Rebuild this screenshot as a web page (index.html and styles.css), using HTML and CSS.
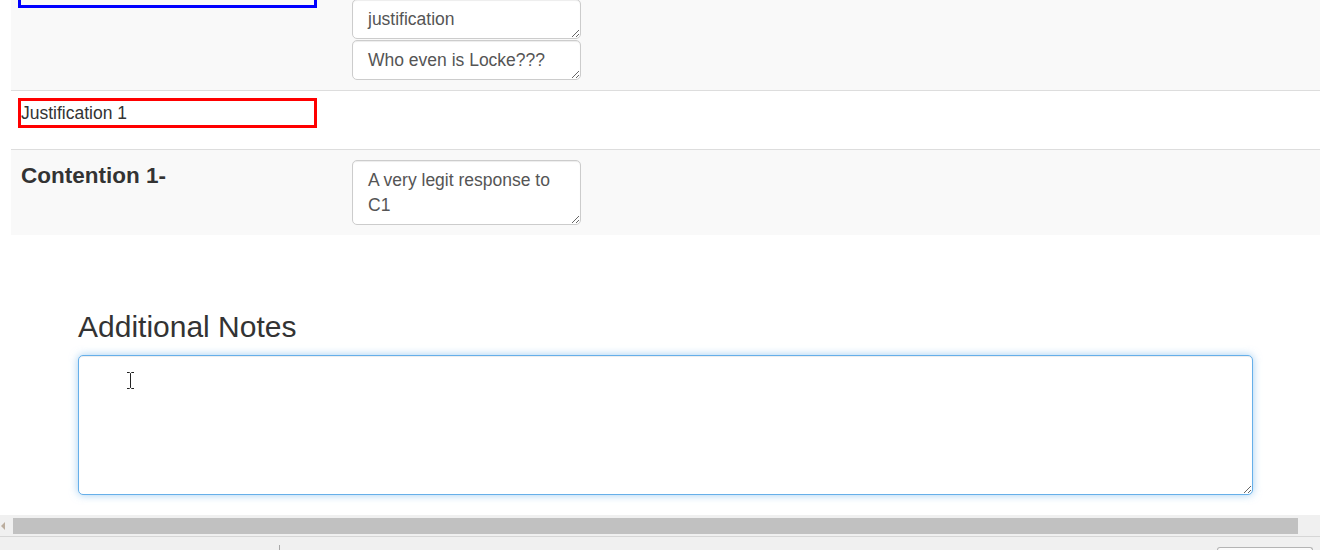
FILE: index.html
```html
<!DOCTYPE html>
<html lang="en">
<head>
<meta charset="utf-8">
<title>Flow sheet</title>
<link rel="stylesheet" href="styles.css">
</head>
<body>
<div class="page">
  <main class="viewport">
    <div class="content">
      <div class="sheet">
        <div class="row striped">
          <div class="cell">
            <div class="cell-spacer"></div>
            <div class="box box-blue"></div>
          </div>
          <div class="cell">
            <textarea class="ta ta-1"></textarea>
            <textarea class="ta ta-1">justification</textarea>
            <textarea class="ta ta-1">Who even is Locke???</textarea>
          </div>
        </div>
        <div class="row row-short">
          <div class="cell">
            <div class="box box-red">Justification 1</div>
          </div>
          <div class="cell"></div>
        </div>
        <div class="row striped">
          <div class="cell">
            <h4 class="contention">Contention 1-</h4>
          </div>
          <div class="cell">
            <textarea class="ta ta-2">A very legit response to C1</textarea>
          </div>
        </div>
      </div>

      <section class="notes">
        <h3 class="notes-title">Additional Notes</h3>
        <div class="notes-field">
          <textarea class="notes-ta"></textarea>
          <svg class="ibeam" width="9" height="17" viewBox="0 0 9 17" aria-hidden="true">
            <path d="M1 0.5h2.5l1 1l1-1h2.5M4.5 1.5v14M1 16.5h2.5l1-1l1 1h2.5" fill="none" stroke="#ffffff" stroke-width="2.2"/>
            <path d="M1 0.5h2.5l1 1l1-1h2.5M4.5 1.5v14M1 16.5h2.5l1-1l1 1h2.5" fill="none" stroke="#222222" stroke-width="1"/>
          </svg>
        </div>
      </section>
    </div>
  </main>

  <div class="hscroll">
    <span class="hscroll-arrow"></span>
    <div class="hscroll-thumb"></div>
  </div>

  <footer class="status">
    <div class="status-seg"></div>
    <div class="status-box"></div>
  </footer>
</div>
</body>
</html>
```

FILE: styles.css
```css
* {
  box-sizing: border-box;
}

html, body {
  margin: 0;
  padding: 0;
  background: #ffffff;
}

body {
  font-family: "Liberation Sans", Arial, sans-serif;
  font-size: 17.5px;
  color: #333333;
}

.page {
  width: 1320px;
  height: 550px;
  display: flex;
  flex-direction: column;
  overflow: hidden;
}

.viewport {
  flex: 1;
  overflow: hidden;
  background: #ffffff;
}

.content {
  margin-top: -52px;
}

/* ---------- table ---------- */
.sheet {
  margin-left: 11px;
  width: 1309px;
}

.row {
  display: grid;
  grid-template-columns: 331px 1fr;
}

.row + .row {
  border-top: 1px solid #dddddd;
}

.striped {
  background: #f9f9f9;
}

.row-short {
  min-height: 59px;
}

.cell {
  padding: 10px;
}

.cell-spacer {
  height: 23px;
}

.box {
  width: 293px;
  height: 24px;
  line-height: 24px;
  color: #333333;
  white-space: nowrap;
}

.box-blue {
  outline: 3px solid #0000ff;
}

.box-red {
  outline: 3px solid #ff0000;
}

.contention {
  margin: 4px 0 0 0;
  font-size: 22.5px;
  line-height: 24.75px;
  font-weight: bold;
  color: #333333;
}

.ta {
  display: block;
  width: 229px;
  margin: 0;
  padding: 7px 15px 5px 15px;
  border: 1px solid #cccccc;
  border-radius: 5px;
  background: #ffffff;
  box-shadow: inset 0 1px 1px rgba(0, 0, 0, 0.075);
  font-family: "Liberation Sans", Arial, sans-serif;
  font-size: 17.5px;
  line-height: 25px;
  color: #555555;
  overflow: hidden;
}

.ta + .ta {
  margin-top: 1px;
}

.ta-1 {
  height: 40px;
}

.ta-2 {
  height: 65px;
}

/* ---------- notes ---------- */
.notes {
  margin: 75px 0 0 78px;
  width: 1175px;
}

.notes-title {
  margin: 0 0 12px 0;
  font-size: 30px;
  line-height: 33px;
  font-weight: normal;
  color: #333333;
}

.notes-field {
  position: relative;
}

.notes-ta {
  display: block;
  width: 1175px;
  height: 140px;
  margin: 0;
  padding: 7px 15px;
  border: 1px solid #66afe9;
  border-radius: 5px;
  background: #ffffff;
  box-shadow: inset 0 1px 1px rgba(0, 0, 0, 0.075), 0 0 8px rgba(102, 175, 233, 0.6);
  font-family: "Liberation Sans", Arial, sans-serif;
  font-size: 17.5px;
  outline: none;
}

.ibeam {
  position: absolute;
  left: 48px;
  top: 17px;
}

/* ---------- scrollbar ---------- */
.hscroll {
  height: 21px;
  background: #f0f0f0;
  display: flex;
  align-items: center;
  padding: 0 22px 0 1px;
}

.hscroll-arrow {
  width: 0;
  height: 0;
  border-top: 4px solid transparent;
  border-bottom: 4px solid transparent;
  border-right: 4px solid #bcae9f;
  margin-right: 8px;
}

.hscroll-thumb {
  flex: 1;
  height: 16px;
  background: #c1c1c1;
}

/* ---------- status bar ---------- */
.status {
  height: 14px;
  background: #f0f0f0;
  border-top: 1px solid #d6d6d6;
  display: flex;
  align-items: flex-end;
  padding-left: 279px;
  padding-right: 7px;
}

.status-seg {
  width: 1px;
  height: 5px;
  background: #a8a8a8;
}

.status-box {
  margin-left: auto;
  width: 96px;
  height: 3px;
  border: 1px solid #b4b4b4;
  border-bottom: none;
  border-radius: 3px 3px 0 0;
  background: #fbfbfb;
}
```
